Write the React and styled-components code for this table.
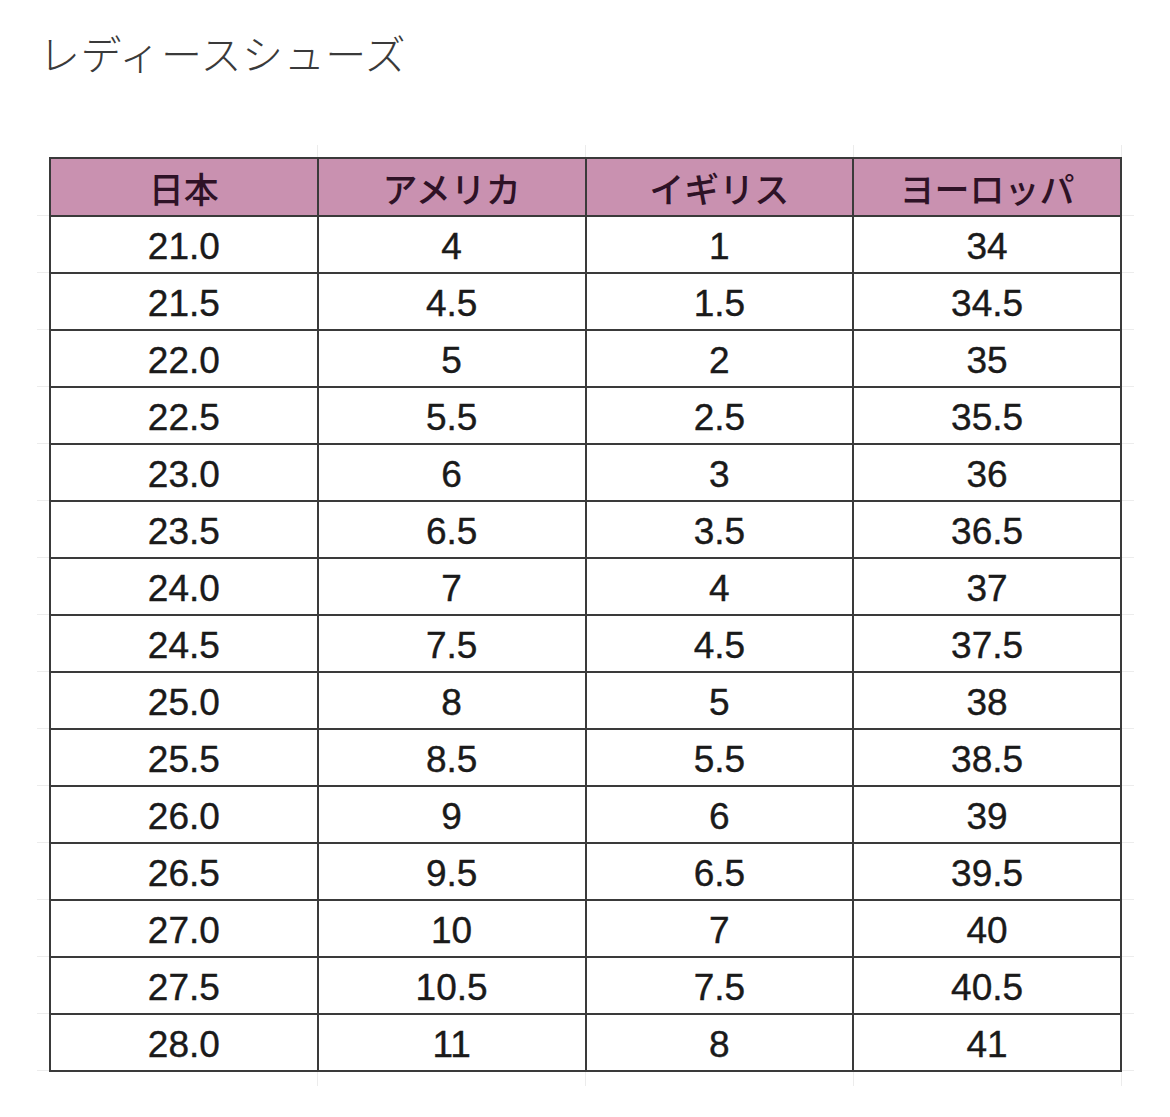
import React from "react";
import styled, { createGlobalStyle } from "styled-components";

const GlobalStyle = createGlobalStyle`
  html, body {
    margin: 0;
    padding: 0;
    background: #fff;
  }
`;

const headers = ["日本", "アメリカ", "イギリス", "ヨーロッパ"];

const rows = [
  ["21.0", "4", "1", "34"],
  ["21.5", "4.5", "1.5", "34.5"],
  ["22.0", "5", "2", "35"],
  ["22.5", "5.5", "2.5", "35.5"],
  ["23.0", "6", "3", "36"],
  ["23.5", "6.5", "3.5", "36.5"],
  ["24.0", "7", "4", "37"],
  ["24.5", "7.5", "4.5", "37.5"],
  ["25.0", "8", "5", "38"],
  ["25.5", "8.5", "5.5", "38.5"],
  ["26.0", "9", "6", "39"],
  ["26.5", "9.5", "6.5", "39.5"],
  ["27.0", "10", "7", "40"],
  ["27.5", "10.5", "7.5", "40.5"],
  ["28.0", "11", "8", "41"],
];

const Page = styled.div`
  width: 1170px;
  height: 1117px;
  overflow: hidden;
  background: #fff;
`;

const Title = styled.h1`
  margin: 0;
  padding: 26px 0 0 39px;
  font-family: "Noto Sans CJK JP", sans-serif;
  font-weight: 300;
  font-size: 41px;
  line-height: 52px;
  color: #3a3a3a;
  letter-spacing: 0.6px;
`;

const Sheet = styled.div`
  margin: 67px 0 0 37px;
  width: 1097px;
  padding: 12px 12px 14px 12px;
  box-sizing: border-box;
  background-image:
    repeating-linear-gradient(
      to right,
      transparent 0 267px,
      #ececec 267px 268px
    ),
    repeating-linear-gradient(
      to bottom,
      transparent 0 56px,
      #ececec 56px 57px
    );
  background-position: 13px 0, 0 14px;
`;

const Table = styled.table`
  border-collapse: collapse;
  table-layout: fixed;
  width: 1073px;
  background: #fff;
`;

const HeadCell = styled.th`
  height: 58px;
  padding: 0;
  border: 2px solid #3a3a3a;
  background: #c991b0;
  color: #2e1226;
  font-family: "Noto Sans CJK JP", sans-serif;
  font-weight: 500;
  font-size: 35px;
  line-height: 1;
  text-align: center;
  vertical-align: middle;
  box-sizing: border-box;
`;

const Cell = styled.td`
  height: 57px;
  padding: 3px 0 0;
  border: 2px solid #3a3a3a;
  color: #1a1a1a;
  font-family: "Liberation Sans", Arial, sans-serif;
  font-size: 37px;
  line-height: 1;
  text-align: center;
  vertical-align: middle;
  box-sizing: border-box;
  -webkit-text-stroke: 0.4px #1a1a1a;
`;

export default function App() {
  return (
    <Page>
      <GlobalStyle />
      <Title>レディースシューズ</Title>
      <Sheet>
        <Table>
          <thead>
            <tr>
              {headers.map((h) => (
                <HeadCell key={h}>{h}</HeadCell>
              ))}
            </tr>
          </thead>
          <tbody>
            {rows.map((r) => (
              <tr key={r[0]}>
                {r.map((v, i) => (
                  <Cell key={i}>{v}</Cell>
                ))}
              </tr>
            ))}
          </tbody>
        </Table>
      </Sheet>
    </Page>
  );
}
